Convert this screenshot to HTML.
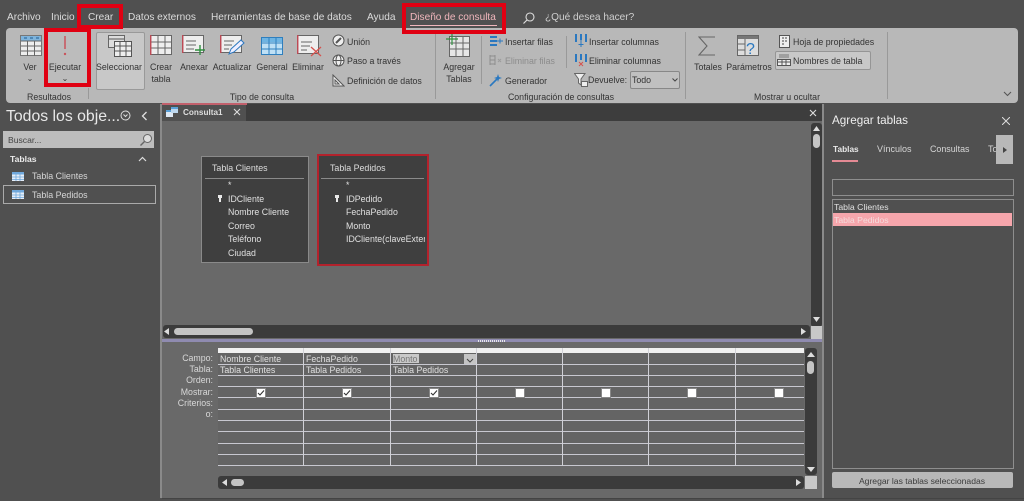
<!DOCTYPE html>
<html lang="es"><head><meta charset="utf-8"><title>Access</title>
<style>
html,body{margin:0;padding:0;background:#505050}
#p{position:relative;width:1024px;height:501px;overflow:hidden;background:#505050;font-family:"Liberation Sans","DejaVu Sans",sans-serif;font-size:8.8px;color:#e2e2e2}
#p div,#p span.a,#p svg{position:absolute}
.t{white-space:nowrap;line-height:12px}
.m{font-size:10.1px;color:#dcdcdc;top:12px}
.r{color:#333;font-size:8.8px;margin-top:1px}
.c{text-align:center;transform:translateX(-50%)}
.red{border:4px solid #e00012;box-sizing:border-box}
.sep{width:1px;background:#999}
.ln{background:#c8c8d0;height:1px}
.vl{background:#d0d0d6;width:1px}
.sb{background:#3b3b3b;border-radius:3px}
.thumb{background:#c4c4c4;border-radius:4px}
.cb{width:8px;height:8px;background:#fff;border:1px solid #888}
.g{color:#e0e0e0;font-size:8.8px}
.f{margin-top:-1px}
.lb{color:#d8d8d8;font-size:8.8px;text-align:right;right:811px}
</style></head><body><div id="p">

<div class="t m" style="left:7px">Archivo</div>
<div class="t m" style="left:51px">Inicio</div>
<div class="t m" style="left:88px">Crear</div>
<div class="t m" style="left:128px">Datos externos</div>
<div class="t m" style="left:211px">Herramientas de base de datos</div>
<div class="t m" style="left:367px">Ayuda</div>
<div class="t m" style="left:410px;color:#f0b6bc">Diseño de consulta</div>
<div style="left:410px;top:25px;width:87px;height:1px;background:#f0b6bc"></div>
<svg style="left:522px;top:11px" width="14" height="14" viewBox="0 0 14 14"><circle cx="8" cy="6" r="4" fill="none" stroke="#ddd" stroke-width="1.1"/><path d="M5 9L1.5 12.5" stroke="#ddd" stroke-width="1.2"/></svg>
<div class="t m" style="left:545px;color:#cfcfcf">¿Qué desea hacer?</div>

<div style="left:6px;top:28px;width:1012px;height:75px;background:#b8b8b8;border-radius:4px"></div>
<div style="left:96px;top:32px;width:47px;height:56px;background:#c8c8c8;border:1px solid #999;border-radius:2px"></div>
<div style="left:46px;top:29px;width:42px;height:55px;background:#bcbcbc"></div>

<!-- Ver -->
<svg style="left:20px;top:35px" width="22" height="21" viewBox="0 0 22 21"><rect x=".5" y=".5" width="21" height="20" fill="#eee" stroke="#777"/><rect x="1" y="1" width="20" height="5" fill="#7fb4dc"/><path d="M1 6H21M1 11H21M1 16H21M7.5 6V21M14.5 6V21" stroke="#666"/><path d="M4 3H7M10 3H13M16 3H19" stroke="#1c5c94"/></svg>
<div class="t r c" style="left:30px;top:60px">Ver</div>
<div class="t r c" style="left:30px;top:72px;font-size:8px">⌄</div>
<!-- Ejecutar -->
<svg style="left:62px;top:35px" width="6" height="22" viewBox="0 0 6 22"><path d="M3 1V14" stroke="#c9535c" stroke-width="1.5"/><circle cx="3" cy="19" r="1.2" fill="#c9535c"/></svg>
<div class="t r c" style="left:65px;top:60px">Ejecutar</div>
<div class="t r c" style="left:65px;top:72px;font-size:8px">⌄</div>
<div class="sep" style="left:88px;top:88px;height:11px"></div>
<div class="t r c" style="left:49px;top:90px">Resultados</div>
<!-- Seleccionar -->
<svg style="left:108px;top:35px" width="24" height="22" viewBox="0 0 24 22"><rect x=".5" y=".5" width="16" height="12" fill="#ddd" stroke="#666"/><rect x="6.5" y="6.5" width="17" height="15" fill="#eee" stroke="#555"/><path d="M1 4H16M7 11H23M7 16H23M12 7V21M18 7V21" stroke="#555"/></svg>
<div class="t r c" style="left:119px;top:60px">Seleccionar</div>
<!-- Crear tabla -->
<svg style="left:150px;top:35px" width="22" height="20" viewBox="0 0 22 20"><rect x=".5" y=".5" width="21" height="19" fill="#eee" stroke="#666"/><path d="M1 7H21M1 13H21M8 1V20M15 1V20" stroke="#666"/><path d="M.7 0V20" stroke="#bd4a55" stroke-width="1.5"/></svg>
<div class="t r c" style="left:161px;top:60px">Crear</div>
<div class="t r c" style="left:161px;top:72px">tabla</div>
<!-- Anexar -->
<svg style="left:182px;top:35px" width="24" height="20" viewBox="0 0 24 20"><rect x=".5" y=".5" width="21" height="17" fill="#eee" stroke="#666"/><path d="M4 6H14M4 10H14M4 14H12" stroke="#666"/><path d="M.7 0V18" stroke="#bd4a55" stroke-width="1.5"/><path d="M18 10V20M13 15H23" stroke="#2f8f3f" stroke-width="1.4"/></svg>
<div class="t r c" style="left:194px;top:60px">Anexar</div>
<!-- Actualizar -->
<svg style="left:220px;top:35px" width="25" height="20" viewBox="0 0 25 20"><rect x=".5" y=".5" width="21" height="17" fill="#eee" stroke="#666"/><path d="M4 6H14M4 10H12M4 14H9" stroke="#666"/><path d="M.7 0V18" stroke="#bd4a55" stroke-width="1.5"/><path d="M9 19L11 14L21 5L24 8L14 17Z" fill="#eef" stroke="#2a78c0"/></svg>
<div class="t r c" style="left:232px;top:60px">Actualizar</div>
<!-- General -->
<svg style="left:261px;top:37px" width="22" height="18" viewBox="0 0 22 18"><rect x=".5" y=".5" width="21" height="17" fill="#bfe0f5" stroke="#2f7fbe"/><rect x="1" y="1" width="20" height="4" fill="#6fb4e2"/><path d="M1 6H21M1 12H21M8 1V18M15 1V18" stroke="#2f7fbe"/></svg>
<div class="t r c" style="left:272px;top:60px">General</div>
<!-- Eliminar -->
<svg style="left:297px;top:35px" width="25" height="22" viewBox="0 0 25 22"><rect x=".5" y=".5" width="21" height="18" fill="#eee" stroke="#666"/><path d="M4 7H15M4 11H13M4 15H10" stroke="#666"/><path d="M.7 0V19" stroke="#bd4a55" stroke-width="1.5"/><path d="M14 12L24 21M24 12L14 21" stroke="#d4534f" stroke-width="1.3"/></svg>
<div class="t r c" style="left:308px;top:60px">Eliminar</div>
<!-- Union etc -->
<svg style="left:332px;top:34px" width="13" height="13" viewBox="0 0 13 13"><circle cx="6.5" cy="6.5" r="5.5" fill="#eee" stroke="#555"/><path d="M4 9L9 4" stroke="#555" stroke-width="2"/></svg>
<div class="t r" style="left:347px;top:35px">Unión</div>
<svg style="left:332px;top:54px" width="13" height="13" viewBox="0 0 13 13"><circle cx="6.5" cy="6.5" r="5.5" fill="#eee" stroke="#555"/><ellipse cx="6.5" cy="6.5" rx="2.5" ry="5.5" fill="none" stroke="#555"/><path d="M1 6.5H12" stroke="#555"/></svg>
<div class="t r" style="left:347px;top:54px">Paso a través</div>
<svg style="left:332px;top:74px" width="13" height="13" viewBox="0 0 13 13"><path d="M1 12V1L12 12Z" fill="#eee" stroke="#555"/><path d="M3 10V6L7 10Z" fill="none" stroke="#555"/></svg>
<div class="t r" style="left:347px;top:74px">Definición de datos</div>
<div class="t r c" style="left:262px;top:90px">Tipo de consulta</div>
<div class="sep" style="left:435px;top:32px;height:67px"></div>
<!-- Agregar Tablas -->
<svg style="left:446px;top:34px" width="24" height="23" viewBox="0 0 24 23"><rect x="3.5" y="2.5" width="20" height="20" fill="#e6e6e6" stroke="#666"/><path d="M4 9H23M4 15H23M10 3V22M17 3V22" stroke="#666"/><path d="M6 0V11M0 5H12" stroke="#2f8f3f" stroke-width="1.2"/></svg>
<div class="t r c" style="left:459px;top:60px">Agregar</div>
<div class="t r c" style="left:459px;top:72px">Tablas</div>
<div class="sep" style="left:481px;top:36px;height:48px"></div>
<!-- filas -->
<svg style="left:489px;top:35px" width="15" height="12" viewBox="0 0 15 12"><path d="M1 2H8M1 6H8M1 10H8" stroke="#2a78c0" stroke-width="2"/><path d="M8 6H14M11 3.5V8.5" stroke="#2a78c0"/></svg>
<div class="t r" style="left:505px;top:35px">Insertar filas</div>
<svg style="left:489px;top:54px" width="15" height="12" viewBox="0 0 15 12"><path d="M1 2H6M1 6H6M1 10H6M1 1V11M6 1V11" stroke="#8e8e8e"/><path d="M9 5L12 8M12 5L9 8" stroke="#9c9c9c"/></svg>
<div class="t r" style="left:505px;top:54px;color:#8c8c8c">Eliminar filas</div>
<svg style="left:489px;top:73px" width="14" height="14" viewBox="0 0 14 14"><path d="M1 13L8 6" stroke="#2a78c0" stroke-width="1.6"/><path d="M9 1L10 4L13 5L10 6L9 9L8 6L5 5L8 4Z" fill="#2a78c0"/></svg>
<div class="t r" style="left:505px;top:74px">Generador</div>
<div class="sep" style="left:566px;top:36px;height:32px"></div>
<!-- columnas -->
<svg style="left:574px;top:33px" width="14" height="15" viewBox="0 0 14 15"><path d="M2 1V9M7 1V7M12 1V9" stroke="#2a78c0" stroke-width="2"/><path d="M7 7V14M4.5 11.5H9.5" stroke="#2a78c0"/></svg>
<div class="t r" style="left:589px;top:35px">Insertar columnas</div>
<svg style="left:574px;top:53px" width="14" height="15" viewBox="0 0 14 15"><path d="M2 1V9M7 1V7M12 1V9" stroke="#2a78c0" stroke-width="2"/><path d="M5 9L9 13M9 9L5 13" stroke="#d4534f"/></svg>
<div class="t r" style="left:589px;top:54px">Eliminar columnas</div>
<svg style="left:574px;top:73px" width="14" height="14" viewBox="0 0 14 14"><path d="M.5 .5H11L7 6V12L4.5 10V6Z" fill="#eee" stroke="#666"/><rect x="7.5" y="8.5" width="6" height="5" fill="#eee" stroke="#666"/></svg>
<div class="t r" style="left:588px;top:73px">Devuelve:</div>
<div style="left:630px;top:71px;width:48px;height:16px;background:#c0c0c0;border:1px solid #888;border-radius:2px"></div>
<div class="t r" style="left:632px;top:73px">Todo</div>
<svg style="left:672px;top:78px" width="6" height="4" viewBox="0 0 6 4"><path d="M.5 .5L3 3L5.5 .5" fill="none" stroke="#444"/></svg>
<div class="t r c" style="left:561px;top:90px">Configuración de consultas</div>
<div class="sep" style="left:685px;top:32px;height:67px"></div>
<!-- Totales etc -->
<svg style="left:698px;top:36px" width="18" height="20" viewBox="0 0 18 20"><path d="M17 1H1L9 10L1 19H17" fill="none" stroke="#666" stroke-width="1.1"/></svg>
<div class="t r c" style="left:708px;top:60px">Totales</div>
<svg style="left:737px;top:35px" width="24" height="22" viewBox="0 0 24 22"><rect x=".5" y=".5" width="21" height="20" fill="#ddd" stroke="#666"/><rect x="1" y="1" width="20" height="3" fill="#777"/><path d="M1 9H8M1 15H8M8 4V21" stroke="#666"/><text x="9" y="19" font-size="16" font-family="Liberation Sans" fill="#2a78c0">?</text></svg>
<div class="t r c" style="left:749px;top:60px">Parámetros</div>
<svg style="left:779px;top:35px" width="11" height="13" viewBox="0 0 11 13"><rect x=".5" y=".5" width="10" height="12" fill="#eee" stroke="#555"/><path d="M3 3H5M3 6H5M3 9H5M6 3H8M6 6H8" stroke="#444"/></svg>
<div class="t r" style="left:793px;top:35px">Hoja de propiedades</div>
<div style="left:775px;top:51px;width:94px;height:17px;background:#c8c8c8;border:1px solid #959595;border-radius:2px"></div>
<svg style="left:777px;top:54px" width="14" height="12" viewBox="0 0 14 12"><rect x=".5" y="5.5" width="13" height="6" fill="#eee" stroke="#555"/><path d="M1 8H13M5 6V11M9 6V11" stroke="#555"/><path d="M2 1H12M2 3H12" stroke="#777"/></svg>
<div class="t r" style="left:793px;top:54px">Nombres de tabla</div>
<div class="t r c" style="left:787px;top:90px">Mostrar u ocultar</div>
<div class="sep" style="left:887px;top:32px;height:67px"></div>
<svg style="left:1003px;top:91px" width="9" height="6" viewBox="0 0 9 6"><path d="M1 1L4.5 4.5L8 1" fill="none" stroke="#555" stroke-width="1.1"/></svg>

<!-- Nav -->
<div class="t" style="left:6px;top:106px;font-size:15.8px;line-height:22px;color:#e8e8e8">Todos los obje...</div>
<svg style="left:120px;top:110px" width="11" height="11" viewBox="0 0 11 11"><circle cx="5.5" cy="5.5" r="4.5" fill="none" stroke="#ddd"/><path d="M3.5 4.5L5.5 6.5L7.5 4.5" fill="none" stroke="#ddd"/></svg>
<svg style="left:141px;top:111px" width="7" height="10" viewBox="0 0 7 10"><path d="M5.5 1L1.5 5L5.5 9" fill="none" stroke="#e0e0e0" stroke-width="1.3"/></svg>
<div style="left:3px;top:131px;width:151px;height:17px;background:#bdbdbd"></div>
<div class="t" style="left:8px;top:134px;color:#444;font-size:8.6px">Buscar...</div>
<svg style="left:139px;top:133px" width="14" height="14" viewBox="0 0 14 14"><circle cx="8.5" cy="5.5" r="4" fill="#ddd" stroke="#666"/><path d="M5.5 8.5L1.5 12.5" stroke="#666" stroke-width="1.4"/></svg>
<div class="t" style="left:10px;top:153px;font-weight:bold;font-size:8.6px;color:#eaeaea">Tablas</div>
<svg style="left:138px;top:156px" width="9" height="6" viewBox="0 0 9 6"><path d="M1 5L4.5 1.5L8 5" fill="none" stroke="#ddd" stroke-width="1.2"/></svg>
<svg style="left:12px;top:172px" width="12" height="9" viewBox="0 0 12 9"><rect width="12" height="9" fill="#e6eef8"/><rect width="12" height="2.5" fill="#6fa8dc"/><path d="M0 5H12M0 7.5H12M4 2V9M8 2V9" stroke="#6fa8dc" stroke-width=".8"/></svg>
<div class="t" style="left:32px;top:170px;color:#d6d6d6;font-size:8.85px">Tabla Clientes</div>
<div style="left:3px;top:185px;width:151px;height:17px;border:1px solid #aaa"></div>
<svg style="left:12px;top:190px" width="12" height="9" viewBox="0 0 12 9"><rect width="12" height="9" fill="#e6eef8"/><rect width="12" height="2.5" fill="#6fa8dc"/><path d="M0 5H12M0 7.5H12M4 2V9M8 2V9" stroke="#6fa8dc" stroke-width=".8"/></svg>
<div class="t" style="left:32px;top:189px;color:#d6d6d6;font-size:8.85px">Tabla Pedidos</div>

<!-- Main -->
<div style="left:160px;top:104px;width:2px;height:394px;background:#8a8a8a"></div>
<div style="left:162px;top:104px;width:660px;height:17px;background:#3d3d3d"></div>
<div style="left:162px;top:104px;width:84px;height:17px;background:#505050"></div>
<div style="left:162px;top:103px;width:85px;height:2px;background:#c2606c"></div>
<svg style="left:166px;top:107px" width="12" height="10" viewBox="0 0 12 10"><rect y="3" width="7" height="7" fill="#dfe9f4"/><rect y="3" width="7" height="2" fill="#5aa0d8"/><rect x="5" width="7" height="6" fill="#bcd7ee"/><rect x="5" width="7" height="2" fill="#5aa0d8"/></svg>
<div class="t" style="left:183px;top:107px;font-weight:bold;font-size:8.2px;color:#dedede">Consulta1</div>
<svg style="left:233px;top:108px" width="8" height="8" viewBox="0 0 8 8"><path d="M1 1L7 7M7 1L1 7" stroke="#ddd" stroke-width="1.1"/></svg>
<svg style="left:809px;top:109px" width="8" height="8" viewBox="0 0 8 8"><path d="M1 1L7 7M7 1L1 7" stroke="#ddd" stroke-width="1.1"/></svg>

<div style="left:162px;top:121px;width:660px;height:218px;background:#696969"></div>
<!-- v scroll -->
<div class="sb" style="left:811px;top:123px;width:11px;height:204px"></div>
<svg style="left:813px;top:126px" width="7" height="5" viewBox="0 0 7 5"><path d="M0 5L3.5 0L7 5Z" fill="#ddd"/></svg>
<div class="thumb" style="left:813px;top:134px;width:7px;height:14px"></div>
<svg style="left:813px;top:317px" width="7" height="5" viewBox="0 0 7 5"><path d="M0 0L3.5 5L7 0Z" fill="#ddd"/></svg>
<!-- h scroll -->
<div class="sb" style="left:163px;top:325px;width:647px;height:13px"></div>
<svg style="left:164px;top:328px" width="5" height="7" viewBox="0 0 5 7"><path d="M5 0L0 3.5L5 7Z" fill="#ddd"/></svg>
<div class="thumb" style="left:174px;top:328px;width:79px;height:7px"></div>
<svg style="left:801px;top:328px" width="5" height="7" viewBox="0 0 5 7"><path d="M0 0L5 3.5L0 7Z" fill="#ddd"/></svg>
<div style="left:811px;top:326px;width:11px;height:13px;background:#c8c8c8"></div>
<!-- splitter -->
<div style="left:162px;top:339px;width:660px;height:3px;background:#8f8bb0"></div>
<div style="left:478px;top:340px;width:28px;height:2px;background:repeating-linear-gradient(90deg,#e8e8e8 0 1px,#8f8bb0 1px 2px)"></div>

<!-- Table 1 -->
<div style="left:201px;top:156px;width:106px;height:105px;background:#3f3f3f;border:1px solid #8a8a8a"></div>
<div style="left:205px;top:178px;width:99px;height:1px;background:#8a8a8a"></div>
<div class="t" style="left:212px;top:162px;font-size:8.85px;color:#ddd">Tabla Clientes</div>
<div class="t g f" style="left:228px;top:180px">*</div>
<svg style="left:218px;top:195px" width="4" height="7" viewBox="0 0 4 7"><rect width="4" height="3" fill="#e8e8e8"/><rect x="1" y="2" width="2" height="5" fill="#e8e8e8"/></svg>
<div class="t g f" style="left:228px;top:194px">IDCliente</div>
<div class="t g f" style="left:228px;top:207px">Nombre Cliente</div>
<div class="t g f" style="left:228px;top:221px">Correo</div>
<div class="t g f" style="left:228px;top:234px">Teléfono</div>
<div class="t g f" style="left:228px;top:248px">Ciudad</div>
<!-- Table 2 -->
<div style="left:317px;top:154px;width:108px;height:108px;background:#3f3f3f;border:2px solid #b3222c"></div>
<div style="left:321px;top:178px;width:103px;height:1px;background:#8a8a8a"></div>
<div class="t" style="left:330px;top:162px;font-size:8.85px;color:#ddd">Tabla Pedidos</div>
<div class="t g f" style="left:346px;top:180px">*</div>
<svg style="left:335px;top:195px" width="4" height="7" viewBox="0 0 4 7"><rect width="4" height="3" fill="#e8e8e8"/><rect x="1" y="2" width="2" height="5" fill="#e8e8e8"/></svg>
<div class="t g f" style="left:346px;top:194px">IDPedido</div>
<div class="t g f" style="left:346px;top:207px">FechaPedido</div>
<div class="t g f" style="left:346px;top:221px">Monto</div>
<div class="t g f" style="left:346px;top:234px;width:79px;overflow:hidden">IDCliente(claveExterna)</div>

<!-- Grid -->
<div style="left:162px;top:342px;width:660px;height:156px;background:#696969"></div>
<div style="left:162px;top:498px;width:862px;height:1px;background:#444"></div>
<div style="left:218px;top:348px;width:586px;height:5px;background:#f0f0f0"></div>
<div style="left:218px;top:353px;width:586px;height:113px;background:#646464"></div>
<div class="ln" style="left:218px;top:364px;width:586px"></div>
<div class="ln" style="left:218px;top:375px;width:586px"></div>
<div class="ln" style="left:218px;top:386px;width:586px"></div>
<div class="ln" style="left:218px;top:397px;width:586px"></div>
<div class="ln" style="left:218px;top:409px;width:586px"></div>
<div class="ln" style="left:218px;top:420px;width:586px"></div>
<div class="ln" style="left:218px;top:431px;width:586px"></div>
<div class="ln" style="left:218px;top:443px;width:586px"></div>
<div class="ln" style="left:218px;top:454px;width:586px"></div>
<div class="ln" style="left:218px;top:465px;width:586px"></div>
<div class="vl" style="left:303px;top:348px;height:118px"></div>
<div class="vl" style="left:390px;top:348px;height:118px"></div>
<div class="vl" style="left:476px;top:348px;height:118px"></div>
<div class="vl" style="left:562px;top:348px;height:118px"></div>
<div class="vl" style="left:648px;top:348px;height:118px"></div>
<div class="vl" style="left:735px;top:348px;height:118px"></div>
<div class="t lb" style="top:352px">Campo:</div>
<div class="t lb" style="top:363px">Tabla:</div>
<div class="t lb" style="top:374px">Orden:</div>
<div class="t lb" style="top:386px">Mostrar:</div>
<div class="t lb" style="top:397px">Criterios:</div>
<div class="t lb" style="top:408px">o:</div>
<div class="t g" style="left:220px;top:353px">Nombre Cliente</div>
<div class="t g" style="left:306px;top:353px">FechaPedido</div>
<div style="left:393px;top:354px;width:26px;height:9px;background:#c9c9c9"></div>
<div class="t g" style="left:393px;top:353px;color:#777">Monto</div>
<div style="left:464px;top:354px;width:12px;height:10px;background:#c4c4c4"></div>
<svg style="left:466px;top:358px" width="8" height="5" viewBox="0 0 8 5"><path d="M1 1L4 4L7 1" fill="none" stroke="#444"/></svg>
<div class="t g" style="left:220px;top:364px">Tabla Clientes</div>
<div class="t g" style="left:306px;top:364px">Tabla Pedidos</div>
<div class="t g" style="left:393px;top:364px">Tabla Pedidos</div>
<div class="cb" style="left:256px;top:388px"></div><svg style="left:257px;top:389px" width="8" height="8" viewBox="0 0 8 8"><path d="M1 4L3 6L7 1.5" fill="none" stroke="#333" stroke-width="1.1"/></svg>
<div class="cb" style="left:342px;top:388px"></div><svg style="left:343px;top:389px" width="8" height="8" viewBox="0 0 8 8"><path d="M1 4L3 6L7 1.5" fill="none" stroke="#333" stroke-width="1.1"/></svg>
<div class="cb" style="left:429px;top:388px"></div><svg style="left:430px;top:389px" width="8" height="8" viewBox="0 0 8 8"><path d="M1 4L3 6L7 1.5" fill="none" stroke="#333" stroke-width="1.1"/></svg>
<div class="cb" style="left:515px;top:388px"></div>
<div class="cb" style="left:601px;top:388px"></div>
<div class="cb" style="left:687px;top:388px"></div>
<div class="cb" style="left:774px;top:388px"></div>
<!-- grid v scroll -->
<div class="sb" style="left:805px;top:348px;width:12px;height:127px"></div>
<svg style="left:807px;top:352px" width="8" height="5" viewBox="0 0 8 5"><path d="M0 5L4 0L8 5Z" fill="#ddd"/></svg>
<div class="thumb" style="left:807px;top:361px;width:7px;height:13px"></div>
<svg style="left:807px;top:467px" width="8" height="5" viewBox="0 0 8 5"><path d="M0 0L4 5L8 0Z" fill="#ddd"/></svg>
<!-- grid h scroll -->
<div class="sb" style="left:218px;top:476px;width:586px;height:13px"></div>
<svg style="left:222px;top:479px" width="5" height="7" viewBox="0 0 5 7"><path d="M5 0L0 3.5L5 7Z" fill="#ddd"/></svg>
<div class="thumb" style="left:231px;top:479px;width:13px;height:7px"></div>
<svg style="left:796px;top:479px" width="5" height="7" viewBox="0 0 5 7"><path d="M0 0L5 3.5L0 7Z" fill="#ddd"/></svg>
<div style="left:805px;top:476px;width:12px;height:13px;background:#c8c8c8"></div>
<div style="left:822px;top:104px;width:2px;height:394px;background:#8a8a8a"></div>

<!-- Right panel -->
<div class="t" style="left:832px;top:115px;font-size:11.7px;color:#eee">Agregar tablas</div>
<svg style="left:1002px;top:117px" width="8" height="8" viewBox="0 0 8 8"><path d="M0 0L8 8M8 0L0 8" stroke="#ddd" stroke-width="1"/></svg>
<div class="t" style="left:833px;top:143px;font-size:8.3px;font-weight:bold;color:#e8e8e8">Tablas</div>
<div style="left:832px;top:160px;width:26px;height:2px;background:#e48a94"></div>
<div class="t" style="left:877px;top:143px;font-size:9px;color:#d6d6d6">Vínculos</div>
<div class="t" style="left:930px;top:143px;font-size:8.9px;color:#d6d6d6">Consultas</div>
<div class="t" style="left:988px;top:143px;font-size:9px;color:#d6d6d6">To</div>
<div style="left:996px;top:135px;width:17px;height:29px;background:#b8b8b8"></div>
<svg style="left:1003px;top:147px" width="4" height="6" viewBox="0 0 4 6"><path d="M0 0L4 3L0 6Z" fill="#444"/></svg>
<div style="left:832px;top:179px;width:180px;height:15px;border:1px solid #8e8e8e"></div>
<div style="left:832px;top:199px;width:180px;height:268px;border:1px solid #8e8e8e"></div>
<div class="t" style="left:834px;top:201px;font-size:8.7px;color:#e0e0e0">Tabla Clientes</div>
<div style="left:833px;top:213px;width:179px;height:13px;background:#f6a6ac"></div>
<div class="t" style="left:834px;top:214px;font-size:8.7px;color:#f4dcdc">Tabla Pedidos</div>
<div style="left:832px;top:472px;width:181px;height:16px;background:#b8b8b8;border-radius:2px"></div>
<div class="t c" style="left:922px;top:475px;color:#3c3c3c;font-size:8.6px">Agregar las tablas seleccionadas</div>

<!-- Red annotation boxes -->
<div class="red" style="left:77px;top:4px;width:46px;height:25px"></div>
<div class="red" style="left:44px;top:28px;width:47px;height:59px"></div>
<div class="red" style="left:402px;top:3px;width:104px;height:31px"></div>
</div></body></html>
